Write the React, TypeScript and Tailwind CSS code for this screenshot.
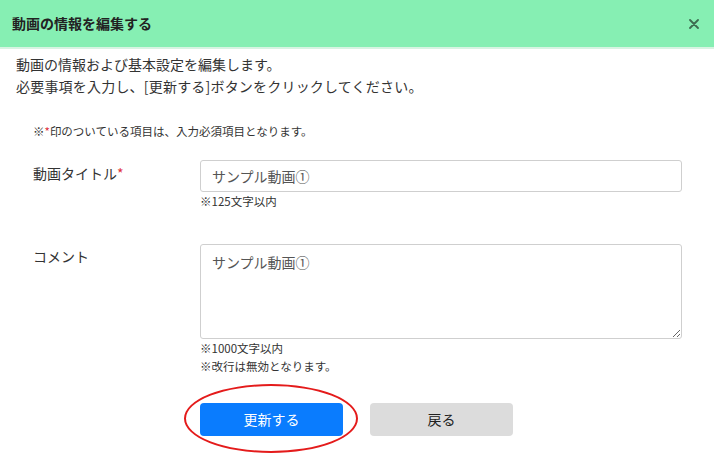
import React from "react";

export default function App() {
  return (
    <div
      className="w-[714px] h-[465px] bg-white text-[#333] overflow-hidden"
      style={{ fontFamily: '"Noto Sans CJK JP", "Noto Sans", sans-serif' }}
    >
      <div className="h-[47px] bg-[#86efb3] flex items-center justify-between pl-[12px] pr-[15px]">
        <span className="text-[14px] font-bold text-[#222]">動画の情報を編集する</span>
        <svg width="10" height="10" viewBox="0 0 10 10" className="mt-[1px]">
          <path d="M1 1 L9 9 M9 1 L1 9" stroke="#3d6b50" strokeWidth="1.8" strokeLinecap="round" />
        </svg>
      </div>
      <div className="h-[2px] bg-[#d7f4e2]" />
      <div className="pt-[4px] pl-[16px] text-[14px] leading-[22px]">
        <p>動画の情報および基本設定を編集します。</p>
        <p className="tracking-[0.2px]">必要事項を入力し、[更新する]ボタンをクリックしてください。</p>
      </div>
      <p className="mt-[26px] pl-[33px] text-[11.5px] leading-[16px]">
        ※<span className="text-[#e0303c]">*</span>印のついている項目は、入力必須項目となります。
      </p>
      <div className="mt-[21px] flex">
        <div className="w-[200px] pl-[33px] pt-[3px] text-[14px] leading-[20px]">
          動画タイトル<span className="text-[#e0303c]">*</span>
        </div>
        <div>
          <div className="w-[482px] h-[32px] border border-[#cfcfcf] rounded-[3px] px-[11px] flex items-center text-[14px] text-[#555]">
            サンプル動画①
          </div>
          <p className="mt-[1px] text-[11.5px] leading-[16px]">※125文字以内</p>
        </div>
      </div>
      <div className="mt-[35px] flex">
        <div className="w-[200px] pl-[33px] pt-[2px] text-[14px] leading-[20px]">コメント</div>
        <div>
          <textarea
            className="block w-[482px] h-[95px] border border-[#cfcfcf] rounded-[3px] px-[11px] pt-[7px] text-[14px] leading-[20px] text-[#555] outline-none"
            defaultValue="サンプル動画①"
          />
          <p className="text-[11.5px] leading-[18px]">※1000文字以内</p>
          <p className="text-[11.5px] leading-[18px]">※改行は無効となります。</p>
        </div>
      </div>
      <div className="mt-[28px] ml-[200px] flex gap-[27px]">
        <div className="relative">
          <button className="w-[143px] h-[33px] rounded-[4px] bg-[#0a7cfe] text-white text-[14px]">
            更新する
          </button>
          <div className="absolute left-[-16px] top-[-19px] w-[174px] h-[69px] rounded-[50%] border-2 border-[#e41b1b] pointer-events-none" />
        </div>
        <button className="w-[143px] h-[33px] rounded-[4px] bg-[#dcdcdc] text-[#222] text-[14px]">
          戻る
        </button>
      </div>
    </div>
  );
}
